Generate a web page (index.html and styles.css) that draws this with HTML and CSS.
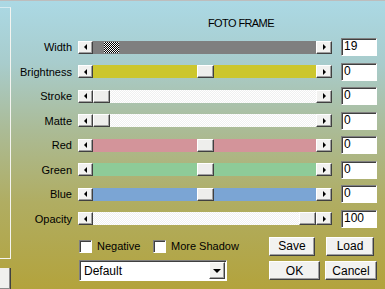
FILE: index.html
```html
<!DOCTYPE html>
<html lang="en">
<head>
    <meta charset="UTF-8">
    <title>Foto Frame</title>
    <link rel="stylesheet" href="styles.css">
</head>
<body>
    <div class="side">
        <div class="side-group"></div>
        <div class="side-btn"></div>
    </div>

    <div class="dialog">
        <h1 class="title">FOTO FRAME</h1>

        <div class="sliders">
            <div class="row">
                <span class="label">Width</span>
                <div class="scroll">
                    <span class="arrow arrow-left"></span>
                    <div class="track track-gray"><span class="thumb thumb-dither" style="left: 11px"></span></div>
                    <span class="arrow arrow-right"></span>
                </div>
                <div class="value">19</div>
            </div>
            <div class="row">
                <span class="label">Brightness</span>
                <div class="scroll">
                    <span class="arrow arrow-left"></span>
                    <div class="track track-yellow"><span class="thumb" style="left: 104px"></span></div>
                    <span class="arrow arrow-right"></span>
                </div>
                <div class="value">0</div>
            </div>
            <div class="row">
                <span class="label">Stroke</span>
                <div class="scroll">
                    <span class="arrow arrow-left"></span>
                    <div class="track track-white"><span class="thumb" style="left: 0px"></span></div>
                    <span class="arrow arrow-right"></span>
                </div>
                <div class="value">0</div>
            </div>
            <div class="row">
                <span class="label">Matte</span>
                <div class="scroll">
                    <span class="arrow arrow-left"></span>
                    <div class="track track-white"><span class="thumb" style="left: 0px"></span></div>
                    <span class="arrow arrow-right"></span>
                </div>
                <div class="value">0</div>
            </div>
            <div class="row">
                <span class="label">Red</span>
                <div class="scroll">
                    <span class="arrow arrow-left"></span>
                    <div class="track track-red"><span class="thumb" style="left: 104px"></span></div>
                    <span class="arrow arrow-right"></span>
                </div>
                <div class="value">0</div>
            </div>
            <div class="row">
                <span class="label">Green</span>
                <div class="scroll">
                    <span class="arrow arrow-left"></span>
                    <div class="track track-green"><span class="thumb" style="left: 104px"></span></div>
                    <span class="arrow arrow-right"></span>
                </div>
                <div class="value">0</div>
            </div>
            <div class="row">
                <span class="label">Blue</span>
                <div class="scroll">
                    <span class="arrow arrow-left"></span>
                    <div class="track track-blue"><span class="thumb" style="left: 104px"></span></div>
                    <span class="arrow arrow-right"></span>
                </div>
                <div class="value">0</div>
            </div>
            <div class="row">
                <span class="label">Opacity</span>
                <div class="scroll">
                    <span class="arrow arrow-left"></span>
                    <div class="track track-white"><span class="thumb" style="left: 206px"></span></div>
                    <span class="arrow arrow-right"></span>
                </div>
                <div class="value">100</div>
            </div>
        </div>

        <div class="options">
            <div class="checks">
                <label class="check check-first"><span class="box"></span>Negative</label>
                <label class="check"><span class="box"></span>More Shadow</label>
            </div>
            <button class="btn btn-save">Save</button>
            <button class="btn btn-load">Load</button>
        </div>

        <div class="options options-last">
            <div class="select">
                <span class="select-text">Default</span>
                <span class="select-arrow"></span>
            </div>
            <button class="btn btn-ok">OK</button>
            <button class="btn btn-cancel">Cancel</button>
        </div>
    </div>
</body>
</html>
```

FILE: styles.css
```css
/* Base */
* {
    margin: 0;
    padding: 0;
    box-sizing: border-box;
}

body {
    display: flex;
    height: 289px;
    overflow: hidden;
    font-family: "Liberation Sans", Arial, sans-serif;
    font-size: 11px;
    color: #000;
    border-top: 1px solid #bdbdbd;
    background: linear-gradient(to bottom, #abd9e5 0%, #a8cccc 22%, #abbb96 45%, #b0ad62 70%, #b3a33c 100%);
}

/* Left edge of the neighbouring panel */
.side {
    width: 11px;
    display: flex;
    flex-direction: column;
    flex-shrink: 0;
}

.side-group {
    margin-top: 6px;
    height: 253px;
    border-top: 1px solid rgba(255, 255, 255, 0.5);
    border-right: 1px solid #f4f4f0;
    border-bottom: 1px solid #f4f4f0;
}

.side-btn {
    margin-top: 9px;
    height: 21px;
    background-color: #f0f0ee;
    border-right: 1px solid #404040;
    box-shadow: inset -1px -1px #8a8a8a;
}

/* Dialog */
.dialog {
    flex: 1;
    padding-top: 16px;
}

.title {
    margin-left: 197px;
    margin-bottom: 5px;
    font-size: 11px;
    font-weight: normal;
    line-height: 13px;
    letter-spacing: -0.6px;
}

/* Slider rows */
.row {
    display: flex;
    align-items: center;
    height: 24.5px;
}

.label {
    width: 61px;
    margin-right: 6px;
    text-align: right;
}

.scroll {
    display: flex;
    width: 254px;
    height: 13px;
}

.arrow {
    position: relative;
    width: 15px;
    height: 13px;
    background-color: #f2f2f0;
    border: 1px solid;
    border-color: #fff #404040 #404040 #fff;
    box-shadow: inset -1px -1px #a0a0a0;
    display: flex;
    justify-content: center;
    align-items: center;
}

.arrow-right {
    width: 16px;
}

.arrow::after {
    content: "";
    border-top: 3px solid transparent;
    border-bottom: 3px solid transparent;
}

.arrow-left::after {
    border-right: 3px solid #000;
}

.arrow-right::after {
    border-left: 3px solid #000;
}

.track {
    position: relative;
    flex: 1;
}

.track-gray {
    background-color: #7f7f7f;
}

.track-yellow {
    background-color: #ccc62d;
}

.track-white {
    background: repeating-conic-gradient(#ffffff 0 25%, #f0f0f0 0 50%) 0 0 / 2px 2px;
}

.track-red {
    background-color: #d3949a;
}

.track-green {
    background-color: #8ecb98;
}

.track-blue {
    background-color: #7ba5d4;
}

.thumb {
    position: absolute;
    top: 0;
    width: 17px;
    height: 13px;
    background-color: #eeeeec;
    border: 1px solid;
    border-color: #fff #404040 #404040 #fff;
    box-shadow: inset -1px -1px #a0a0a0;
}

.thumb-dither {
    top: 1px;
    width: 15px;
    height: 11px;
    border: none;
    box-shadow: none;
    background: repeating-conic-gradient(#000 0 25%, #fff 0 50%) 0 0 / 2px 2px;
}

.value {
    width: 36px;
    height: 18px;
    margin-left: 9px;
    padding-left: 2px;
    line-height: 15px;
    font-size: 12px;
    background-color: #fff;
    border: 1px solid;
    border-color: #808080 #fff #fff #808080;
    box-shadow: inset 1px 1px #404040;
}

/* Options & buttons */
.options {
    display: flex;
    align-items: center;
    height: 20px;
    margin-top: 5px;
    padding-left: 68px;
}

.options-last {
    height: 21px;
    margin-top: 4px;
}

.checks {
    display: flex;
    width: 190px;
}

.check {
    display: flex;
    align-items: center;
    font-size: 11px;
}

.check-first {
    width: 74px;
}

.box {
    width: 13px;
    height: 13px;
    margin-right: 5px;
    background-color: #fff;
    border: 1px solid;
    border-color: #808080 #fff #fff #808080;
    box-shadow: inset 1px 1px #404040;
}

.btn {
    height: 19px;
    font-family: "Liberation Sans", Arial, sans-serif;
    font-size: 12px;
    color: #000;
    background-color: #f2f2f0;
    border: 1px solid;
    border-color: #fff #404040 #404040 #fff;
    box-shadow: inset -1px -1px #a0a0a0;
}

.btn-save {
    width: 46px;
}

.btn-load {
    width: 48px;
    margin-left: 11px;
}

.btn-ok {
    width: 51px;
    margin-left: 42px;
}

.btn-cancel {
    width: 52px;
    margin-left: 5px;
}

.select {
    display: flex;
    align-items: center;
    justify-content: space-between;
    width: 148px;
    height: 21px;
    padding: 0 1px 0 4px;
    background-color: #fff;
    border: 1px solid;
    border-color: #808080 #fff #fff #808080;
    box-shadow: inset 1px 1px #404040;
}

.select-text {
    font-size: 12px;
}

.select-arrow {
    display: flex;
    justify-content: center;
    align-items: center;
    width: 16px;
    height: 17px;
    background-color: #f2f2f0;
    border: 1px solid;
    border-color: #fff #404040 #404040 #fff;
    box-shadow: inset -1px -1px #a0a0a0;
}

.select-arrow::after {
    content: "";
    border-left: 4px solid transparent;
    border-right: 4px solid transparent;
    border-top: 4px solid #000;
}
```
